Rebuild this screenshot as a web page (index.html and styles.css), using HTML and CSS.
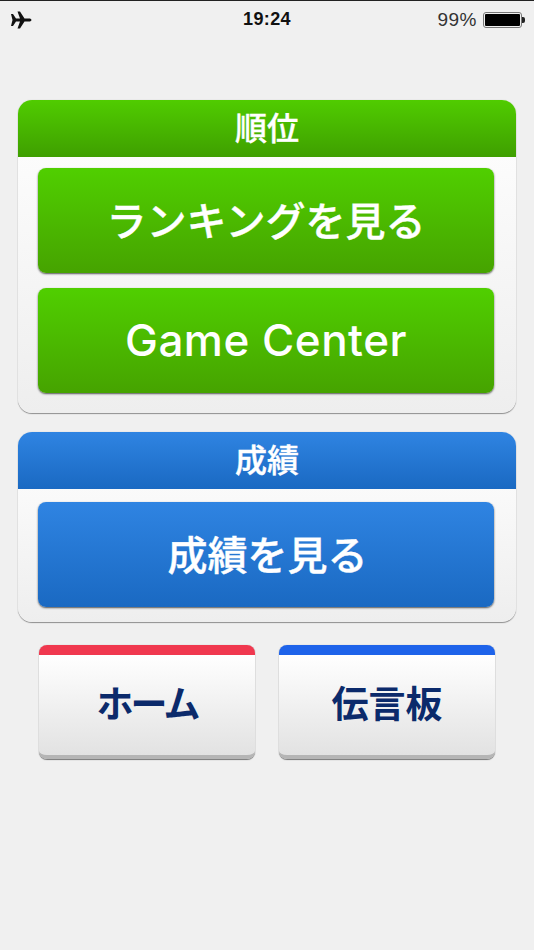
FILE: index.html
```html
<!DOCTYPE html>
<html lang="ja">
<head>
    <meta charset="UTF-8">
    <meta name="viewport" content="width=device-width, initial-scale=1.0">
    <title>順位</title>
    <link rel="stylesheet" href="styles.css">
</head>
<body>
    <div class="status-bar">
        <div class="status-left">
            <svg class="plane" viewBox="0 0 22 18" width="22" height="18">
                <path d="M1 3 L3 3 L6 7.500 L10 7.500 L7.500 0.500 L10 0.500 L14.500 7.500 L19 7.500 C20.500 7.500 21.500 8.200 21.500 9 C21.500 9.800 20.500 10.500 19 10.500 L14.500 10.500 L10 17.500 L7.500 17.500 L10 10.500 L6 10.500 L3 15 L1 15 L2.500 9 Z" fill="#111"/>
            </svg>
        </div>
        <div class="status-time">19:24</div>
        <div class="status-right">
            <span class="battery-text">99%</span>
            <span class="battery"><span class="battery-fill"></span></span>
            <span class="battery-tip"></span>
        </div>
    </div>

    <div class="content">
        <section class="panel">
            <h2 class="panel-title green">順位</h2>
            <div class="panel-body">
                <a class="big-button green">ランキングを見る</a>
                <a class="big-button green latin">Game Center</a>
            </div>
        </section>

        <section class="panel">
            <h2 class="panel-title blue">成績</h2>
            <div class="panel-body single">
                <a class="big-button blue">成績を見る</a>
            </div>
        </section>

        <div class="nav-buttons">
            <a class="nav-button red-top">ホーム</a>
            <a class="nav-button blue-top">伝言板</a>
        </div>
    </div>
</body>
</html>
```

FILE: styles.css
```css
* {
    margin: 0;
    padding: 0;
    box-sizing: border-box;
    font-family: "Noto Sans CJK JP", "Liberation Sans", sans-serif;
}

body {
    width: 534px;
    height: 950px;
    overflow: hidden;
    background-color: #f0f0f0;
}

.status-bar {
    height: 38px;
    border-top: 1px solid #222;
    display: grid;
    grid-template-columns: 1fr auto 1fr;
    align-items: center;
    padding: 0 9px 0 10px;
    color: #111;
}

.status-left {
    display: flex;
    align-items: center;
}

.status-time {
    font-family: "Liberation Sans", sans-serif;
    font-size: 18px;
    font-weight: bold;
    letter-spacing: 0.4px;
    padding-right: 1px;
}

.status-right {
    display: flex;
    align-items: center;
    justify-content: flex-end;
}

.battery-text {
    font-family: "Liberation Sans", sans-serif;
    font-size: 19px;
    color: #333;
    margin-right: 6px;
    letter-spacing: 0.5px;
}

.battery {
    width: 39px;
    height: 16px;
    border: 1px solid #777;
    border-radius: 3px;
    padding: 1px;
    display: block;
}

.battery-fill {
    display: block;
    height: 100%;
    background-color: #000;
    border-radius: 1px;
}

.battery-tip {
    width: 3px;
    height: 6px;
    background-color: #222;
    border-radius: 0 2px 2px 0;
}

.content {
    padding: 62px 18px 0;
}

.panel {
    background: linear-gradient(to bottom, #fff, #eee);
    border-radius: 14px;
    box-shadow: 0 1px 1px #8f8f8f, 0 0 1px #bbb;
    margin-bottom: 19px;
    overflow: hidden;
}

.panel-title {
    height: 57px;
    text-align: center;
    color: #fff;
    font-size: 32px;
    line-height: 53px;
    font-weight: 500;
    -webkit-text-stroke: 0.4px #fff;
}

.panel-title.green {
    background: linear-gradient(to bottom, #50cc00, #3f9f00);
}

.panel-title.blue {
    background: linear-gradient(to bottom, #2f84e2, #1a69c2);
}

.panel-body {
    padding: 11px 22px 20px 20px;
    display: flex;
    flex-direction: column;
    gap: 15px;
}

.panel-body.single {
    padding: 13px 22px 15px 20px;
    text-indent: 3px;
}

.big-button {
    display: block;
    height: 105px;
    border-radius: 8px;
    text-align: center;
    color: #fff;
    font-size: 40px;
    line-height: 102px;
    font-weight: 500;
    -webkit-text-stroke: 0.4px #fff;
    box-shadow: 0 1px 2px #555;
}

.big-button.latin {
    font-family: "Inter", "Liberation Sans", sans-serif;
    font-size: 44px;
    line-height: 105px;
    letter-spacing: 0.5px;
    -webkit-text-stroke: 0;
}

.big-button.green {
    background: linear-gradient(to bottom, #50cf00, #46a300);
}

.big-button.blue {
    background: linear-gradient(to bottom, #2f84e2, #1a69c2);
}

.nav-buttons {
    display: flex;
    justify-content: space-between;
    padding: 4px 21px 0;
}

.nav-button {
    width: 216px;
    height: 114px;
    border-radius: 8px;
    text-align: center;
    color: #0b2a6b;
    font-size: 37px;
    line-height: 94px;
    font-weight: 700;
    background: linear-gradient(to bottom, #fff, #e2e2e2);
    box-shadow: 0 1px 1px #777, 0 0 1px #aaa;
    border-bottom: 4px solid #b5b5b5;
}

.red-top {
    border-top: 10px solid #f0384f;
    letter-spacing: -3px;
}

.blue-top {
    border-top: 10px solid #1e63ea;
}
```
